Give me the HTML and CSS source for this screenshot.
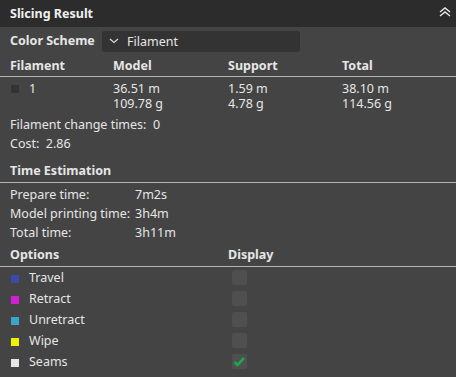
FILE: index.html
```html
<!DOCTYPE html>
<html lang="en">
<head>
  <meta charset="UTF-8">
  <title>Slicing Result</title>
  <link rel="stylesheet" href="styles.css">
</head>
<body>

  <div class="panel">
    <div class="title-bar">
      <span class="title">Slicing Result</span>
      <svg class="collapse" width="14" height="10" viewBox="0 0 14 10">
        <path d="M2 5 L7 1 L12 5 M2 9 L7 5 L12 9" fill="none" stroke="#e8e8e8" stroke-width="1.4"/>
      </svg>
    </div>

    <div class="scheme-row">
      <span class="bold">Color Scheme</span>
      <div class="combo">
        <svg width="10" height="6" viewBox="0 0 10 6">
          <path d="M1 1 L5 4.5 L9 1" fill="none" stroke="#ddd" stroke-width="1.1"/>
        </svg>
        <span>Filament</span>
      </div>
    </div>

    <div class="grid head">
      <span>Filament</span>
      <span>Model</span>
      <span>Support</span>
      <span>Total</span>
    </div>
    <div class="line"></div>

    <div class="grid data">
      <span class="fil"><i class="swatch dark"></i>1</span>
      <span>36.51 m<br>109.78 g</span>
      <span>1.59 m<br>4.78 g</span>
      <span>38.10 m<br>114.56 g</span>
    </div>

    <div class="info">
      <div>Filament change times:&nbsp; 0</div>
      <div>Cost:&nbsp; 2.86</div>
    </div>

    <div class="section-head bold">Time Estimation</div>
    <div class="line"></div>

    <div class="times">
      <span>Prepare time:</span><span>7m2s</span>
      <span>Model printing time:</span><span>3h4m</span>
      <span>Total time:</span><span>3h11m</span>
    </div>

    <div class="opt-grid opt-head bold">
      <span>Options</span>
      <span>Display</span>
    </div>
    <div class="line"></div>

    <div class="opt-grid opt-row">
      <span><i class="swatch" style="background:#3a4aa6"></i>Travel</span>
      <span class="check"></span>
    </div>
    <div class="opt-grid opt-row">
      <span><i class="swatch" style="background:#d21fd2"></i>Retract</span>
      <span class="check"></span>
    </div>
    <div class="opt-grid opt-row">
      <span><i class="swatch" style="background:#3ca4c8"></i>Unretract</span>
      <span class="check"></span>
    </div>
    <div class="opt-grid opt-row">
      <span><i class="swatch" style="background:#f0f000"></i>Wipe</span>
      <span class="check"></span>
    </div>
    <div class="opt-grid opt-row">
      <span><i class="swatch" style="background:#e6e6e6"></i>Seams</span>
      <span class="check on">
        <svg width="13" height="11" viewBox="0 0 13 11">
          <path d="M1.5 6 L4.5 9 L11 2" fill="none" stroke="#1fa84a" stroke-width="2.6"/>
        </svg>
      </span>
    </div>
  </div>

</body>
</html>
```

FILE: styles.css
```css
body {
  margin: 0;
  background: #444444;
  font-family: 'Noto Sans', sans-serif;
  font-size: 12.5px;
  color: #e6e6e6;
}

.panel {
  width: 456px;
  height: 377px;
  overflow: hidden;
}

.bold {
  font-weight: bold;
}

.title-bar {
  height: 27px;
  background: #2c2c2c;
  display: flex;
  align-items: center;
  justify-content: space-between;
  padding: 0 4px 0 10px;
}

.title {
  font-weight: bold;
  font-size: 12.5px;
  color: #f0f0f0;
  margin-top: -1px;
}

.collapse {
  margin-top: -3px;
}

.scheme-row {
  display: flex;
  align-items: center;
  height: 27px;
  padding-left: 10px;
}

.scheme-row .bold {
  width: 92px;
}

.combo {
  width: 198px;
  height: 21px;
  margin-top: 1px;
  background: #333333;
  border-radius: 3px;
  display: flex;
  align-items: center;
  gap: 8px;
  padding-left: 7px;
  box-sizing: border-box;
}

.grid {
  display: grid;
  grid-template-columns: 103px 115px 114px 1fr;
  padding-left: 10px;
}

.head {
  height: 22px;
  align-items: center;
  font-weight: bold;
}

.line {
  height: 1px;
  background: #b4b4b4;
}

.data {
  padding-top: 4px;
  line-height: 15px;
}

.fil {
  display: flex;
  align-items: flex-start;
}

.swatch {
  display: inline-block;
  width: 8px;
  height: 8px;
  margin: 4px 10px 0 1px;
}

.swatch.dark {
  background: #333333;
}

.info {
  margin-top: 4px;
  padding-left: 10px;
  line-height: 19px;
}

.section-head {
  height: 23px;
  margin-top: 6px;
  padding-left: 10px;
  display: flex;
  align-items: center;
}

.times {
  display: grid;
  grid-template-columns: 125px 1fr;
  padding-left: 10px;
  padding-top: 2px;
  line-height: 19px;
}

.opt-grid {
  display: grid;
  grid-template-columns: 218px 1fr;
  padding-left: 10px;
  align-items: center;
}

.opt-head {
  height: 24px;
}

.opt-row {
  height: 21px;
}

.opt-row .swatch {
  margin: 0 10px 0 1px;
  vertical-align: -0.5px;
}

.check {
  width: 15px;
  height: 15px;
  margin-left: 4px;
  background: #4f4f4f;
  border-radius: 2px;
  display: flex;
  align-items: center;
  justify-content: center;
}
```
